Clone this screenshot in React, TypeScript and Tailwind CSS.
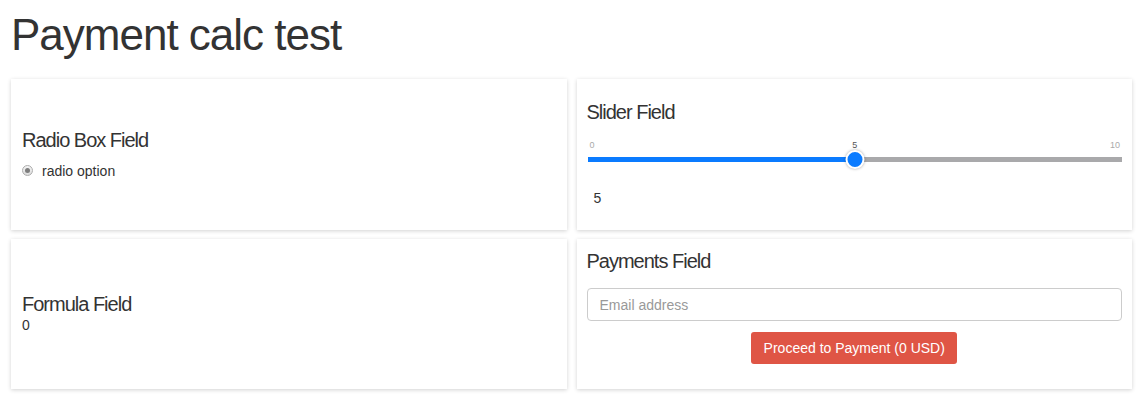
const Card = ({ className = "", children }: { className?: string; children: React.ReactNode }) => (
  <div className={`bg-white shadow-[0_1px_4px_rgba(0,0,0,0.18)] px-[10px] ${className}`}>{children}</div>
);

const FieldTitle = ({ children }: { children: React.ReactNode }) => (
  <h3 className="text-[20px] leading-[22px] tracking-[-1px] text-[#333]">{children}</h3>
);

const App = () => {
  const value = 5;
  const pct = (value / 10) * 100;

  return (
    <div className="min-h-[405px] bg-white pl-[11px] pr-[15px] text-[#333] font-['Liberation_Sans',Arial,sans-serif]">
      <h1 className="pt-[11px] mb-[20px] text-[44px] leading-[48px] tracking-[-1px] text-[#333]">Payment calc test</h1>

      <div className="grid grid-cols-2 gap-x-[10px] gap-y-[9px]">
        {/* radio */}
        <Card className="flex flex-col justify-center">
          <div className="pl-[1px]">
            <FieldTitle>Radio Box Field</FieldTitle>
          </div>
          <label className="mt-[10px] flex items-center gap-[9px] text-[14px] leading-[20px]">
            <span className="ml-[1px] flex h-[11px] w-[11px] items-center justify-center rounded-full border border-[#adadad] bg-[linear-gradient(#f4f4f4,#dcdcdc)]">
              <span className="h-[5px] w-[5px] rounded-full bg-[#7d7d7d]" />
            </span>
            radio option
          </label>
        </Card>

        {/* slider */}
        <Card className="pt-[22px] pb-[22px]">
          <FieldTitle>Slider Field</FieldTitle>
          <div className="mt-[17px] pl-[1px]">
            <div className="relative flex h-[10px] justify-between px-[2px] text-[9px] leading-[10px] text-[#aaa]">
              <span>0</span>
              <span
                className="absolute -translate-x-1/2 font-medium text-[#555]"
                style={{ left: `${pct}%` }}
              >
                {value}
              </span>
              <span>10</span>
            </div>
            <div className="relative h-[18px]">
              <div className="absolute left-0 right-0 top-[7px] h-[5px] bg-[#a9a9ab]" />
              <div className="absolute left-0 top-[7px] h-[5px] bg-[#0a7bff]" style={{ width: `${pct}%` }} />
              <div
                className="absolute top-0 h-[19px] w-[19px] -translate-x-1/2 rounded-full border-2 border-white bg-[#0a7bff] shadow-[0_0_3px_rgba(0,0,0,0.35)]"
                style={{ left: `${pct}%` }}
              />
            </div>
          </div>
          <div className="mt-[20px] ml-[7px] text-[14px] leading-[20px]">{value}</div>
        </Card>

        {/* formula */}
        <Card className="flex flex-col justify-center">
          <div className="pl-[1px]">
            <FieldTitle>Formula Field</FieldTitle>
            <div className="text-[14px] leading-[20px]">0</div>
          </div>
        </Card>

        {/* payments */}
        <Card className="pt-[11px] pb-[25px]">
          <FieldTitle>Payments Field</FieldTitle>
          <input
            type="email"
            placeholder="Email address"
            className="mt-[16px] block h-[33px] w-full rounded-[4px] border border-[#ccc] px-[12px] text-[14px] text-[#555] outline-none placeholder:text-[#999]"
          />
          <div className="mt-[11px] flex justify-center">
            <button className="h-[32px] w-[206px] rounded-[3px] bg-[#df5545] text-[14px] text-white">
              Proceed to Payment (0 USD)
            </button>
          </div>
        </Card>
      </div>
    </div>
  );
};

export default App;
